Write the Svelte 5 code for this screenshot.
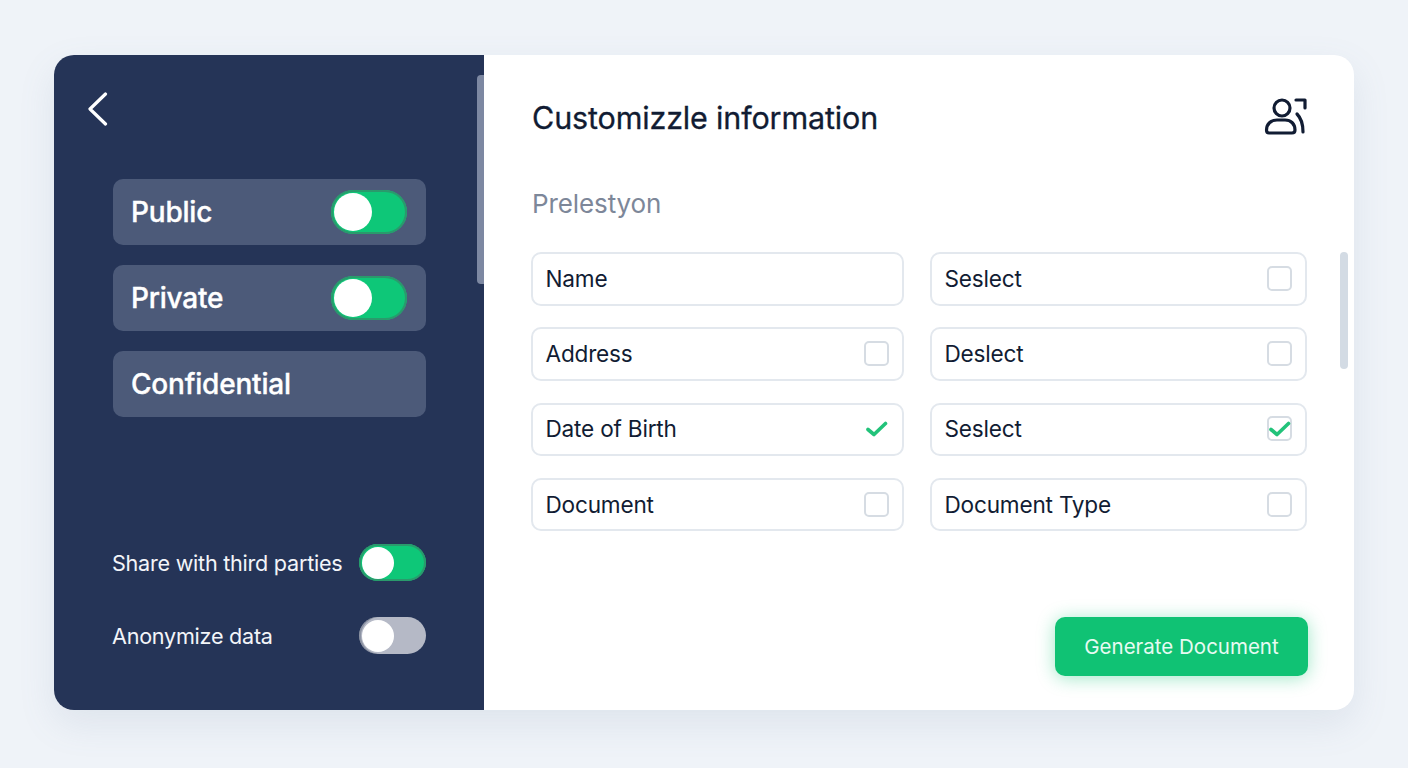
<script>
  const privacy = [
    { label: 'Public', on: true },
    { label: 'Private', on: true },
    { label: 'Confidential', on: null }
  ];
  const sharing = [
    { label: 'Share with third parties', on: true },
    { label: 'Anonymize data', on: false }
  ];
  const fields = [
    { label: 'Name', mark: 'none' },
    { label: 'Seslect', mark: 'box' },
    { label: 'Address', mark: 'box' },
    { label: 'Deslect', mark: 'box' },
    { label: 'Date of Birth', mark: 'check' },
    { label: 'Seslect', mark: 'boxcheck' },
    { label: 'Document', mark: 'box' },
    { label: 'Document Type', mark: 'box' }
  ];
</script>

<main class="page">
  <section class="card">
    <aside class="side">
      <div class="side-scroll"></div>
      <button class="back" aria-label="Back">
        <svg width="22" height="34" viewBox="0 0 22 34" fill="none" stroke="#fff" stroke-width="3.2" stroke-linecap="round" stroke-linejoin="round">
          <path d="M18.500 2 L3 17 L18.500 32" />
        </svg>
      </button>
      <div class="rows">
        {#each privacy as p}
          <div class="row">
            <span>{p.label}</span>
            {#if p.on !== null}
              <span class="toggle big on"><i></i></span>
            {/if}
          </div>
        {/each}
      </div>
      <div class="shares">
        {#each sharing as s}
          <div class="share">
            <span>{s.label}</span>
            <span class="toggle" class:on={s.on}><i></i></span>
          </div>
        {/each}
      </div>
    </aside>

    <div class="main">
      <div class="main-scroll"></div>
      <header class="head">
        <h1>Customizzle information</h1>
        <svg width="43" height="38" viewBox="0 0 43 38" fill="none" stroke="#111c33" stroke-width="3.2" stroke-linecap="round" stroke-linejoin="round">
          <circle cx="18" cy="11" r="8" />
          <path d="M5 36 H28 Q31 36 31 33 C31 27 27 23 21 23 H13 C7 23 2.500 27 2.500 33 Q2.500 36 5 36 Z" />
          <path d="M32 3 H41 V11" />
          <path d="M33 17 C37 21 39 28 39 35" />
        </svg>
      </header>
      <h2>Prelestyon</h2>
      <div class="grid">
        {#each fields as f}
          <div class="field">
            <span>{f.label}</span>
            {#if f.mark === 'box' || f.mark === 'boxcheck'}
              <span class="box">
                {#if f.mark === 'boxcheck'}
                  <svg width="22" height="16" viewBox="0 0 22 16" fill="none" stroke="#22c37a" stroke-width="3.600" stroke-linecap="round" stroke-linejoin="round"><path d="M2 8.500 L8 13.500 L19.500 2.500" /></svg>
                {/if}
              </span>
            {:else if f.mark === 'check'}
              <span class="box plain">
                <svg width="22" height="16" viewBox="0 0 22 16" fill="none" stroke="#22c37a" stroke-width="3.600" stroke-linecap="round" stroke-linejoin="round"><path d="M2 8.500 L8 13.500 L19.500 2.500" /></svg>
              </span>
            {/if}
          </div>
        {/each}
      </div>
      <div class="actions">
        <button class="generate">Generate Document</button>
      </div>
    </div>
  </section>
</main>

<style>
  :global(body) {
    margin: 0;
    background: #eff3f8;
  }
  .page {
    box-sizing: border-box;
    width: 1408px;
    height: 768px;
    padding: 55px 54px 58px;
    background: #eff3f8;
    font-family: Inter, "Liberation Sans", sans-serif;
  }
  .card {
    display: flex;
    height: 655px;
    border-radius: 20px;
    background: #fff;
    overflow: hidden;
    box-shadow: 0 14px 36px rgba(110, 130, 160, 0.13);
  }
  .side {
    position: relative;
    box-sizing: border-box;
    width: 430px;
    flex: none;
    display: flex;
    flex-direction: column;
    padding: 37px 58px 56px 59px;
    background: #253457;
    color: #fff;
  }
  .side-scroll {
    position: absolute;
    top: 20px;
    right: 0;
    width: 7px;
    height: 209px;
    border-radius: 4px 0 0 4px;
    background: #7d88a2;
  }
  .back {
    align-self: flex-start;
    display: block;
    height: 34px;
    margin: 0 0 0 -26px;
    padding: 0;
    border: 0;
    background: none;
  }
  .back svg {
    display: block;
  }
  .rows {
    display: flex;
    flex-direction: column;
    gap: 20px;
    margin-top: 53px;
  }
  .row {
    display: flex;
    align-items: center;
    justify-content: space-between;
    box-sizing: border-box;
    height: 66px;
    padding: 0 19px 0 18px;
    border-radius: 10px;
    background: #4c5a79;
    font-size: 28px;
    font-weight: 500;
    letter-spacing: -0.2px;
    -webkit-text-stroke: 0.35px #fff;
  }
  .shares {
    display: flex;
    flex-direction: column;
    gap: 36px;
    margin-top: auto;
  }
  .share {
    display: flex;
    align-items: center;
    justify-content: space-between;
    margin-left: -1px;
    font-size: 21.600px;
    letter-spacing: -0.25px;
    color: #f3f5f9;
  }
  .toggle {
    box-sizing: border-box;
    display: flex;
    align-items: center;
    width: 67px;
    height: 37px;
    padding: 0 4px 0 3px;
    border-radius: 19px;
    background: #b5b9c6;
    box-shadow: inset 2px 0 0 0 rgba(80, 90, 110, 0.4);
  }
  .toggle.on {
    background: #0ec778;
    box-shadow: inset 0 0 0 2px #2a9a6c;
  }
  .toggle i {
    display: block;
    width: 32px;
    height: 32px;
    border-radius: 50%;
    background: #fff;
  }
  .toggle.big {
    width: 76px;
    height: 44px;
    padding: 0 3px;
    border-radius: 22px;
  }
  .toggle.big i {
    width: 38px;
    height: 38px;
  }
  .main {
    position: relative;
    flex: 1;
    display: flex;
    flex-direction: column;
    box-sizing: border-box;
    padding: 0 47px 34px 47px;
    color: #111c33;
  }
  .main-scroll {
    position: absolute;
    top: 197px;
    right: 6px;
    width: 8px;
    height: 117px;
    border-radius: 4px;
    background: #d3dbe4;
  }
  .head {
    display: flex;
    align-items: center;
    justify-content: space-between;
    height: 40px;
    margin-top: 42px;
  }
  .head svg {
    display: block;
    align-self: flex-start;
  }
  h1 {
    margin: 0 0 0 1px;
    font-size: 30.500px;
    font-weight: 400;
    letter-spacing: -0.15px;
    white-space: nowrap;
    -webkit-text-stroke: 0.3px #111c33;
  }
  h2 {
    margin: 48px 0 0 1px;
    height: 38px;
    line-height: 38px;
    font-size: 26px;
    font-weight: 400;
    letter-spacing: -0.1px;
    color: #7d8799;
  }
  .grid {
    display: grid;
    grid-template-columns: 373px 377px;
    column-gap: 26px;
    row-gap: 21.800px;
    margin-top: 29px;
  }
  .field {
    box-sizing: border-box;
    display: flex;
    align-items: center;
    justify-content: space-between;
    height: 53.500px;
    padding: 0 13px 1px 12.500px;
    border: 2px solid #e3e8ee;
    border-radius: 10px;
    background: #fff;
    font-size: 22.600px;
    letter-spacing: -0.2px;
    white-space: nowrap;
  }
  .box {
    box-sizing: border-box;
    display: flex;
    align-items: center;
    justify-content: center;
    width: 25px;
    height: 25px;
    border: 2px solid #d6dce3;
    border-radius: 5px;
  }
  .box.plain {
    border-color: transparent;
  }
  .box svg {
    flex: none;
  }
  .actions {
    display: flex;
    justify-content: flex-end;
    margin-top: auto;
    margin-right: -1px;
  }
  .generate {
    width: 253px;
    height: 59px;
    border: 0;
    border-radius: 10px;
    background: #10c274;
    color: #e6fbf2;
    font-family: inherit;
    font-size: 20.500px;
    font-weight: 400;
    box-shadow: 0 2px 18px rgba(16, 194, 116, 0.4);
  }
</style>
